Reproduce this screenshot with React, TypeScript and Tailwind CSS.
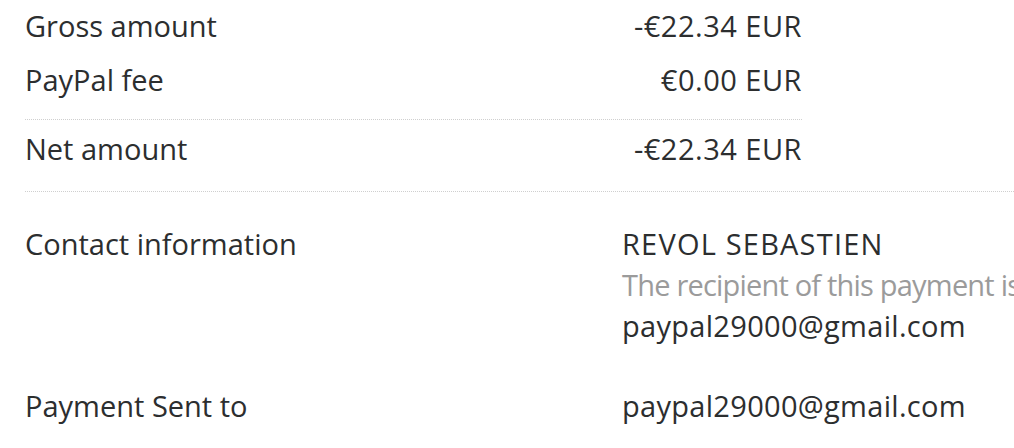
export default function App() {
  const amounts = [
    { label: "Gross amount", value: "-€22.34 EUR" },
    { label: "PayPal fee", value: "€0.00 EUR" },
  ];

  return (
    <div className="h-[448px] w-[1014px] overflow-hidden bg-white font-['Open_Sans',sans-serif] text-[29px] text-[#2c2e2f]">
      {/* Amounts */}
      <div className="pl-[25px]">
        <div className="w-[777px]">
          <div className="flex flex-col gap-[18px] pt-[8px] pb-[21px]">
            {amounts.map((row) => (
              <div key={row.label} className="flex justify-between leading-[36px]">
                <span>{row.label}</span>
                <span className="tracking-[0.5px]">{row.value}</span>
              </div>
            ))}
          </div>
          <div className="border-t border-dotted border-[#cfcfcf]" />
          <div className="flex justify-between pt-[11px] pb-[24px] leading-[36px]">
            <span>Net amount</span>
            <span className="tracking-[0.5px]">-€22.34 EUR</span>
          </div>
        </div>
      </div>
      <div className="ml-[25px] border-t border-dotted border-[#cfcfcf]" />

      {/* Contact */}
      <div className="grid grid-cols-[597px_1fr] pl-[25px] pt-[31px] leading-[41px]">
        <span>Contact information</span>
        <div className="flex flex-col whitespace-nowrap">
          <span className="tracking-[1.2px]">REVOL SEBASTIEN</span>
          <span className="tracking-[-0.8px] text-[#9b9b9b]">
            The recipient of this payment is Verified
          </span>
          <span className="tracking-[0.3px]">paypal29000@gmail.com</span>
        </div>
      </div>
      <div className="grid grid-cols-[597px_1fr] pl-[25px] pt-[39px] leading-[41px]">
        <span>Payment Sent to</span>
        <span className="tracking-[0.3px]">paypal29000@gmail.com</span>
      </div>
    </div>
  );
}
